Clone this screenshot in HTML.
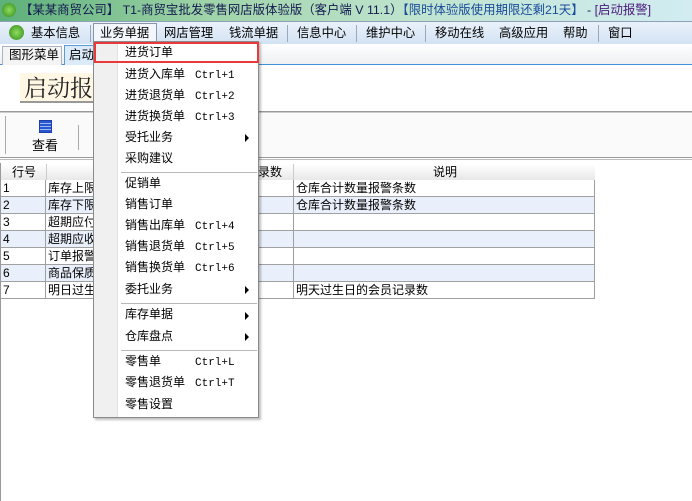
<!DOCTYPE html>
<html><head><meta charset="utf-8"><style>
*{margin:0;padding:0;box-sizing:border-box}
body{width:692px;height:501px;position:relative;overflow:hidden;background:#fff;font-family:"Liberation Sans","Noto Sans CJK SC","WenQuanYi Zen Hei",sans-serif;font-size:12px;color:#000}
.a{position:absolute;white-space:nowrap}
#title{left:0;top:0;width:692px;height:21px;background:linear-gradient(90deg,#5db07a 0%,#9fd3a8 30%,#bfe4cf 60%,#d2ecf2 100%);font-size:12.4px;line-height:21px}
#menu{left:0;top:21px;width:692px;height:23px;background:linear-gradient(#eaf2fb,#d3e2f3);border-top:1px solid #8da0b5;font-size:12.3px;line-height:22px}
.sep{position:absolute;top:3px;width:1px;height:17px;background:#9aa8b8}
#tabs{left:0;top:44px;width:692px;height:21px;background:linear-gradient(#fff,#eef0f2);border-bottom:1px solid #3f8fd9}
.rows div{position:absolute;height:17px;border-bottom:1px solid #a0a0a0;border-right:1px solid #a0a0a0;line-height:16px;padding-left:2px}
.mi{position:absolute;left:125px;font-size:12px;line-height:21px}
.sc{position:absolute;left:195px;font-family:"Liberation Mono",monospace;font-size:11px;line-height:21px;margin-top:2px}
.ar{position:absolute;left:245px;width:0;height:0;border-left:4px solid #000;border-top:4px solid transparent;border-bottom:4px solid transparent}
.ms{position:absolute;left:121px;width:136px;height:1px;background:#b8b8b8}
</style></head><body>
<div id="title" class="a"><span class="a" style="left:2px;top:3px;width:14px;height:14px;border-radius:50%;background:radial-gradient(#8fdc5a,#2f8a1c)"></span><span class="a" style="left:20px;color:#141a50">【某某商贸公司】 T1-商贸宝批发零售网店版体验版（客户端 V 11.1）<span style="color:#1a4a9a">【限时体验版使用期限还剩21天】</span> - <span style="color:#4a1a7a">[启动报警]</span></span></div>
<div id="menu" class="a">
<span class="a" style="left:9px;top:3px;width:15px;height:15px;border-radius:50%;background:radial-gradient(#8fdc5a,#2f8a1c)"></span>
<span class="a" style="left:31px">基本信息</span><div class="sep" style="left:90px"></div>
<span class="a" style="left:93px;top:1px;width:64px;height:20px;border:1px solid #8a96a8;background:#f3f6fa"></span>
<span class="a" style="left:100px">业务单据</span>
<span class="a" style="left:164px">网店管理</span><span class="a" style="left:229px">钱流单据</span><div class="sep" style="left:287px"></div>
<span class="a" style="left:297px">信息中心</span><div class="sep" style="left:356px"></div>
<span class="a" style="left:366px">维护中心</span><div class="sep" style="left:425px"></div>
<span class="a" style="left:435px">移动在线</span><span class="a" style="left:499px">高级应用</span><span class="a" style="left:563px">帮助</span><div class="sep" style="left:598px"></div><span class="a" style="left:608px">窗口</span>
</div>
<div id="tabs" class="a">
<span class="a" style="left:2px;top:2px;width:60px;height:19px;border:1px solid #a8b4c2;border-bottom:none;background:#f4f4f4;font-size:12.5px;line-height:17px;padding-left:6px">图形菜单</span>
<span class="a" style="left:64px;top:1px;width:40px;height:20px;border:1px solid #5a9ad8;border-bottom:none;background:#dcebfa;font-size:12.5px;line-height:18px;padding-left:4px">启动</span>
</div>
<div class="a" style="left:20px;top:73px;width:80px;height:30px;background:#fff6e4;border-right:2px solid #999;border-bottom:2px solid #999;font-family:'Noto Serif CJK SC',serif;font-size:23px;line-height:28px;padding-left:4px;color:#222">启动报</div>
<div class="a" style="left:0;top:111px;width:692px;height:2px;border-top:1px solid #999;border-bottom:1px solid #ccc"></div>
<div class="a" style="left:0;top:113px;width:692px;height:44px;background:#fafafa"></div>
<div class="a" style="left:5px;top:116px;width:1px;height:38px;background:#aaa"></div>
<div class="a" style="left:78px;top:125px;width:1px;height:25px;background:#aaa"></div>
<div class="a" style="left:39px;top:120px;width:13px;height:13px;border:1px solid #1e3fa8;background:repeating-linear-gradient(#2a56d0 0 2px,#9cb8f0 2px 3px)"></div>
<div class="a" style="left:32px;top:135px;font-size:13px">查看</div>
<div class="a" style="left:0;top:157px;width:692px;height:3px;border-top:1px solid #999;border-bottom:1px solid #bbb"></div>
<div class="a" style="left:0;top:163px;width:1px;height:338px;background:#999"></div>
<div class="a" style="left:1px;top:164px;width:594px;height:16px;background:linear-gradient(#fff,#e8e8e8);font-size:12px;line-height:16px">
<span class="a" style="left:11px">行号</span><span class="a" style="left:45px;top:0;width:1px;height:16px;background:#ccc"></span><span class="a" style="left:257px">录数</span><span class="a" style="left:292px;top:0;width:1px;height:16px;background:#ccc"></span><span class="a" style="left:432px">说明</span></div>
<div class="rows">
<div style="left:1px;top:180px;width:45px">1</div><div style="left:46px;top:180px;width:248px">库存上限</div><div style="left:294px;top:180px;width:301px">仓库合计数量报警条数</div>
<div style="left:1px;top:197px;width:45px;background:#e9f0fb">2</div><div style="left:46px;top:197px;width:248px;background:#e9f0fb">库存下限</div><div style="left:294px;top:197px;width:301px;background:#e9f0fb">仓库合计数量报警条数</div>
<div style="left:1px;top:214px;width:45px">3</div><div style="left:46px;top:214px;width:248px">超期应付</div><div style="left:294px;top:214px;width:301px"></div>
<div style="left:1px;top:231px;width:45px;background:#e9f0fb">4</div><div style="left:46px;top:231px;width:248px;background:#e9f0fb">超期应收</div><div style="left:294px;top:231px;width:301px;background:#e9f0fb"></div>
<div style="left:1px;top:248px;width:45px">5</div><div style="left:46px;top:248px;width:248px">订单报警</div><div style="left:294px;top:248px;width:301px"></div>
<div style="left:1px;top:265px;width:45px;background:#e9f0fb">6</div><div style="left:46px;top:265px;width:248px;background:#e9f0fb">商品保质</div><div style="left:294px;top:265px;width:301px;background:#e9f0fb"></div>
<div style="left:1px;top:282px;width:45px">7</div><div style="left:46px;top:282px;width:248px">明日过生</div><div style="left:294px;top:282px;width:301px">明天过生日的会员记录数</div>
</div>
<div class="a" style="left:93px;top:41px;width:166px;height:377px;background:#fff;border:1px solid #8a8a8a;box-shadow:2px 2px 2px rgba(0,0,0,.25)">
<div class="a" style="left:0;top:0;width:24px;height:375px;background:#f0f0f0;border-right:1px solid #e2e2e2"></div>
</div>
<div class="a" style="left:0;top:0">
<div class="a" style="left:94px;top:42px;width:165px;height:21px;border:2px solid #e83a3a"></div>
<span class="mi" style="top:42px">进货订单</span>
<span class="mi" style="top:64px">进货入库单</span><span class="sc" style="top:64px">Ctrl+1</span>
<span class="mi" style="top:85px">进货退货单</span><span class="sc" style="top:85px">Ctrl+2</span>
<span class="mi" style="top:106px">进货换货单</span><span class="sc" style="top:106px">Ctrl+3</span>
<span class="mi" style="top:127px">受托业务</span><span class="ar" style="top:134px"></span>
<span class="mi" style="top:148px">采购建议</span>
<div class="ms" style="top:172px"></div>
<span class="mi" style="top:173px">促销单</span>
<span class="mi" style="top:194px">销售订单</span>
<span class="mi" style="top:215px">销售出库单</span><span class="sc" style="top:215px">Ctrl+4</span>
<span class="mi" style="top:236px">销售退货单</span><span class="sc" style="top:236px">Ctrl+5</span>
<span class="mi" style="top:257px">销售换货单</span><span class="sc" style="top:257px">Ctrl+6</span>
<span class="mi" style="top:279px">委托业务</span><span class="ar" style="top:286px"></span>
<div class="ms" style="top:303px"></div>
<span class="mi" style="top:304px">库存单据</span><span class="ar" style="top:312px"></span>
<span class="mi" style="top:326px">仓库盘点</span><span class="ar" style="top:333px"></span>
<div class="ms" style="top:350px"></div>
<span class="mi" style="top:351px">零售单</span><span class="sc" style="top:351px">Ctrl+L</span>
<span class="mi" style="top:372px">零售退货单</span><span class="sc" style="top:372px">Ctrl+T</span>
<span class="mi" style="top:394px">零售设置</span>
</div>
</body></html>
